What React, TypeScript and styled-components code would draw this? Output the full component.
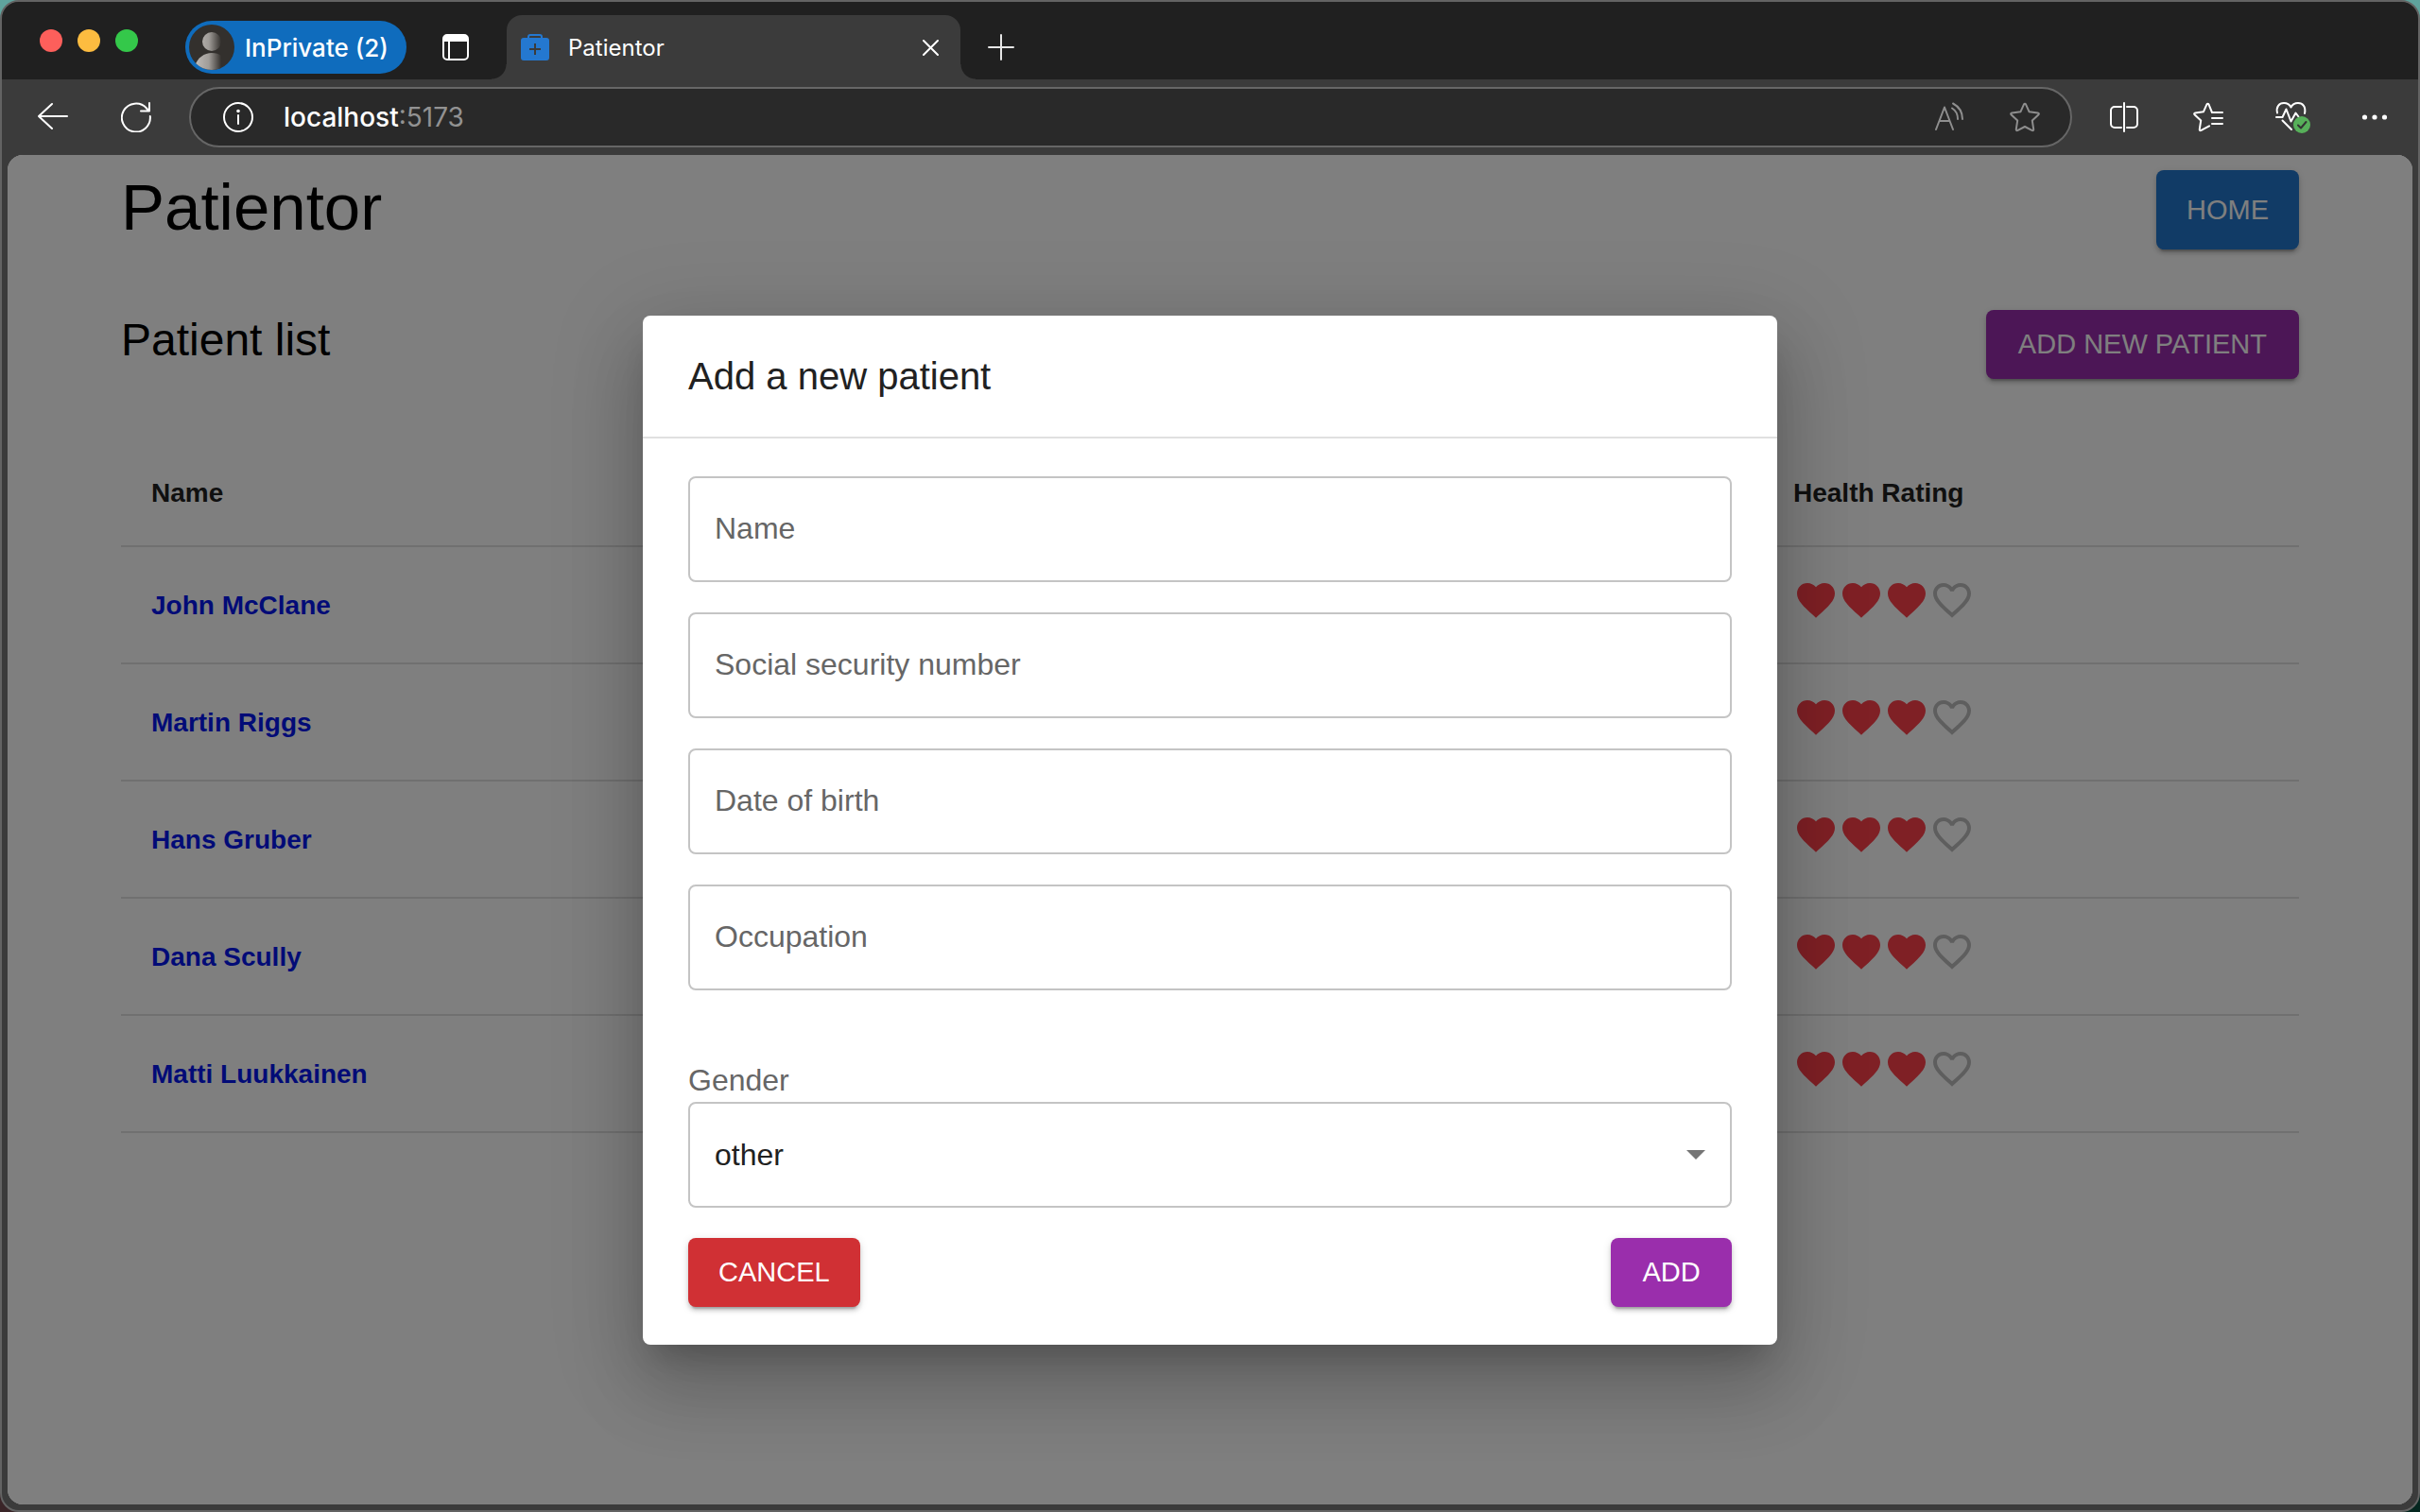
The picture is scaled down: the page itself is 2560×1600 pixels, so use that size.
import React from "react";
import styled, { createGlobalStyle, css } from "styled-components";

const helvetica = `"Liberation Sans", Arial, sans-serif`;
const system = `Inter, "Liberation Sans", sans-serif`;

const GlobalStyle = createGlobalStyle`
  *, *::before, *::after { box-sizing: border-box; }
  html, body { margin: 0; padding: 0; }
  body {
    background: linear-gradient(90deg, #5fa39d 0 50%, #5fa39d 50%) top / 100% 50% no-repeat,
      linear-gradient(90deg, #3a2528 0 50%, #04261f 50%) bottom / 100% 50% no-repeat;
    font-family: ${helvetica};
    color: #000;
  }
  button, input, select { font: inherit; color: inherit; }
`;

const BrowserWindow = styled.div`
  display: flex;
  flex-direction: column;
  height: 100vh;
  overflow: hidden;
  border: 2px solid #636363;
  border-radius: 20px;
  background: #3b3b3b;
`;

/* ---------- tab strip ---------- */

const TabStrip = styled.header`
  display: flex;
  align-items: center;
  height: 82px;
  flex: none;
  padding-left: 40px;
  background: #202020;
  font-family: ${system};
  color: #fff;
`;

const TrafficLights = styled.div`
  display: flex;
  gap: 16px;
  margin-right: 50px;
`;

const Light = styled.span<{ $color: string }>`
  width: 24px;
  height: 24px;
  border-radius: 50%;
  background: ${(p) => p.$color};
`;

const StripItems = styled.div`
  display: flex;
  align-items: center;
  align-self: flex-end;
  height: 68px;
`;

const bare = css`
  border: 0;
  padding: 0;
  background: none;
  cursor: pointer;
`;

const ProfilePill = styled.button`
  ${bare}
  display: flex;
  align-items: center;
  gap: 11px;
  width: 234px;
  height: 56px;
  padding: 0 4px;
  border-radius: 28px;
  background: #0f6cbd;
  font-size: 26px;
  font-weight: 500;
  white-space: nowrap;
`;

const IconButton = styled.button<{ $color?: string }>`
  ${bare}
  display: flex;
  align-items: center;
  justify-content: center;
  width: 64px;
  height: 64px;
  flex: none;
  color: ${(p) => p.$color ?? "#fff"};
  svg { display: block; }
`;

const WorkspaceButton = styled(IconButton)`
  margin: 0 22px 0 20px;
`;

const Tab = styled.div`
  position: relative;
  display: flex;
  align-items: center;
  gap: 20px;
  width: 480px;
  height: 68px;
  padding: 0 0 0 15px;
  border-radius: 16px 16px 0 0;
  background: #3b3b3b;
  font-size: 24px;

  &::before,
  &::after {
    content: "";
    position: absolute;
    bottom: 0;
    width: 16px;
    height: 16px;
  }
  &::before {
    right: 100%;
    background: radial-gradient(circle at 0 0, transparent 15px, #3b3b3b 16px);
  }
  &::after {
    left: 100%;
    background: radial-gradient(circle at 100% 0, transparent 15px, #3b3b3b 16px);
  }
`;

const TabTitle = styled.span`
  flex: 1;
`;

const NewTabButton = styled(IconButton)`
  margin-left: 11px;
`;

/* ---------- toolbar ---------- */

const Toolbar = styled.nav`
  display: flex;
  align-items: center;
  gap: 24px;
  height: 80px;
  flex: none;
  padding: 0 14px 0 22px;
`;

const AddressBar = styled.div`
  display: flex;
  align-items: center;
  gap: 16px;
  flex: 1;
  height: 64px;
  padding: 0 16px 0 18px;
  border: 2px solid #666;
  border-radius: 32px;
  background: #292929;
  font-family: ${system};
  font-size: 28px;
`;

const Url = styled.span`
  flex: 1;
  color: #929292;
  strong { font-weight: 500; color: #fff; }
`;

/* ---------- page ---------- */

const Viewport = styled.main`
  position: relative;
  flex: 1;
  min-height: 0;
  margin: 0 6px 6px;
  overflow: hidden;
  border-radius: 16px;
  background: #fff;
`;

const Container = styled.div`
  max-width: 2400px;
  margin: 0 auto;
  padding: 16px 48px;
`;

const TitleRow = styled.div`
  display: flex;
  justify-content: space-between;
  align-items: stretch;
`;

const ListRow = styled.div`
  display: flex;
  justify-content: space-between;
  align-items: flex-start;
  margin: 64px 0;
`;

const AppTitle = styled.h1`
  margin: 0;
  font-size: 69px;
  font-weight: 400;
  line-height: 80px;
`;

const ListTitle = styled.h2`
  margin: 0;
  font-size: 48px;
  font-weight: 400;
  line-height: 64px;
`;

const Button = styled.button<{ $color: string; $wide?: boolean; $tall?: boolean }>`
  min-width: 128px;
  height: ${(p) => (p.$tall ? 84 : 73)}px;
  padding: 0 ${(p) => (p.$wide ? 34 : 32)}px;
  border: 0;
  border-radius: 8px;
  background: ${(p) => p.$color};
  color: #fff;
  font-size: 29px;
  text-transform: uppercase;
  white-space: nowrap;
  cursor: pointer;
  box-shadow: 0 6px 2px -4px rgba(0, 0, 0, 0.2), 0 4px 4px rgba(0, 0, 0, 0.14),
    0 2px 10px rgba(0, 0, 0, 0.12);
`;

const PatientTable = styled.table`
  width: 100%;
  border-spacing: 0;
  font-size: 28px;
  line-height: 40px;
  text-align: left;
`;

const HeadCell = styled.th<{ $rating?: boolean }>`
  width: ${(p) => (p.$rating ? "567px" : "auto")};
  height: 114px;
  padding: 2px 32px 0;
  border-bottom: 2px solid #e0e0e0;
  color: #212121;
  font-weight: 700;
`;

const Cell = styled.td<{ $top?: boolean }>`
  height: 124px;
  padding: ${(p) => (p.$top ? "32px 32px 0" : "2px 32px 0")};
  border-bottom: 2px solid #e0e0e0;
  vertical-align: ${(p) => (p.$top ? "top" : "middle")};
`;

const PatientLink = styled.a`
  color: #0417ee;
  font-weight: 700;
  text-decoration: none;
`;

const Hearts = styled.div`
  display: flex;
  svg { width: 48px; height: 48px; }
`;

/* ---------- dialog ---------- */

const Backdrop = styled.div`
  position: absolute;
  inset: 0;
  display: flex;
  align-items: center;
  justify-content: center;
  background: rgba(0, 0, 0, 0.5);
`;

const Dialog = styled.section`
  width: 100%;
  max-width: 1200px;
  margin: 64px;
  border-radius: 8px;
  background: #fff;
  box-shadow: 0 22px 30px -14px rgba(0, 0, 0, 0.2), 0 48px 76px 6px rgba(0, 0, 0, 0.14),
    0 18px 92px 16px rgba(0, 0, 0, 0.12);
`;

const DialogTitle = styled.h2`
  margin: 0;
  padding: 32px 48px;
  border-bottom: 2px solid #e0e0e0;
  color: #212121;
  font-size: 40px;
  font-weight: 400;
  line-height: 64px;
`;

const Form = styled.form`
  display: flex;
  flex-direction: column;
  gap: 32px;
  padding: 40px 48px;
  font-size: 32px;
  line-height: 46px;
`;

const Field = styled.div`
  display: grid;
  align-items: center;
  > * { grid-area: 1 / 1; }
`;

const box = css`
  width: 100%;
  height: 112px;
  padding: 0 26px;
  border: 2px solid #c4c4c4;
  border-radius: 8px;
  background: transparent;
  color: #212121;
  outline: none;
`;

const TextInput = styled.input`
  ${box}
  &:not(:placeholder-shown) + label { visibility: hidden; }
`;

const FieldLabel = styled.label`
  padding: 0 28px 2px;
  color: #666;
  pointer-events: none;
`;

const GenderGroup = styled.div`
  margin-top: 40px;
`;

const GenderLabel = styled.label`
  display: block;
  color: #666;
`;

const Select = styled.select`
  ${box}
  appearance: none;
`;

const SelectArrow = styled.svg`
  justify-self: end;
  margin-right: 28px;
  pointer-events: none;
`;

const Actions = styled.div`
  display: flex;
  justify-content: space-between;
`;

/* ---------- icons ---------- */

const line = {
  fill: "none",
  stroke: "currentColor",
  strokeWidth: 2,
  strokeLinecap: "round" as const,
  strokeLinejoin: "round" as const,
};

const Avatar = () => (
  <svg width="48" height="48" viewBox="0 0 48 48">
    <defs>
      <linearGradient id="person" x1="8" x2="34" y1="0" y2="0" gradientUnits="userSpaceOnUse">
        <stop offset="0" stopColor="#bcb8b4" />
        <stop offset="0.5" stopColor="#a09c98" />
        <stop offset="1" stopColor="#33302d" />
      </linearGradient>
      <clipPath id="disc"><circle cx="24" cy="24" r="24" /></clipPath>
    </defs>
    <g clipPath="url(#disc)">
      <rect width="48" height="48" fill="#33302d" />
      <circle cx="24" cy="18" r="10" fill="url(#person)" />
      <path d="M6 44C9 35 16 30 24 30c4 0 8 1 10 3v15H6z" fill="url(#person)" />
    </g>
  </svg>
);

const WorkspaceIcon = () => (
  <svg width="28" height="28" viewBox="0 0 28 28">
    <rect x="1" y="1" width="26" height="26" rx="4" {...line} />
    <path d="M1 8V5a4 4 0 0 1 4-4h18a4 4 0 0 1 4 4v3z" fill="currentColor" />
    <path d="M7 8v19" {...line} />
  </svg>
);

const Favicon = () => (
  <svg width="30" height="28" viewBox="0 0 30 28">
    <path d="M8 5V3a2 2 0 0 1 2-2h10a2 2 0 0 1 2 2v2" fill="none" stroke="#2478d0" strokeWidth="2" />
    <rect y="4" width="30" height="24" rx="3" fill="#2478d0" />
    <path d="M15 10v12M9 16h12" stroke="#3b3b3b" strokeWidth="2" />
  </svg>
);

const CloseIcon = () => (
  <svg width="18" height="18" viewBox="0 0 18 18">
    <path d="M2 2l15 15M17 2L2 17" {...line} />
  </svg>
);

const PlusIcon = () => (
  <svg width="28" height="28" viewBox="0 0 28 28">
    <path d="M14 1v26M1 14h26" {...line} />
  </svg>
);

const BackIcon = () => (
  <svg width="32" height="32" viewBox="0 0 32 32">
    <path d="M31 15H1M15 2L1 15l14 13" {...line} />
  </svg>
);

const ReloadIcon = () => (
  <svg width="32" height="32" viewBox="0 0 32 32">
    <path d="M30.800 15A15 15 0 1 1 27 6.500L29.500 9.500M30 1v8.500h-9" {...line} />
  </svg>
);

const InfoIcon = () => (
  <svg width="32" height="32" viewBox="0 0 32 32">
    <circle cx="16" cy="16" r="15" {...line} />
    <path d="M16 14v9" {...line} />
    <circle cx="16" cy="9.500" r="1.800" fill="currentColor" />
  </svg>
);

const ReadAloudIcon = () => (
  <svg width="32" height="32" viewBox="0 0 32 32">
    <path d="M2 29L11 5.500 20 29M5.500 20h11M19 6.500C23 9 25 13 25 18M20 1.500C26.500 5 30 11 30 18" {...line} />
  </svg>
);

const StarIcon = () => (
  <svg width="32" height="32" viewBox="0 0 32 32">
    <path
      d="M14.900 2.600q1.100-1.900 2.200 0L20.600 10.300l9 1.200q2.100.5.700 2L23.800 19.600l1.400 9.100q.1 2-1.800 1.200L16 26l-7.400 3.900q-1.900.8-1.800-1.200l1.400-9.100L1.700 13.500q-1.400-1.500.7-2l9-1.200z"
      {...line}
    />
  </svg>
);

const SplitIcon = () => (
  <svg width="32" height="32" viewBox="0 0 32 32">
    <path d="M12 5H5a4 4 0 0 0-4 4v14a4 4 0 0 0 4 4h7M18 5h7a4 4 0 0 1 4 4v14a4 4 0 0 1-4 4h-7M15 1v30" {...line} />
  </svg>
);

const FavoritesIcon = () => (
  <svg width="32" height="32" viewBox="0 0 32 32">
    <path
      d="M17 25.300L8.600 29.900q-1.900.8-1.800-1.200l1.400-9.100L1.700 13.500q-1.400-1.500.7-2l8.500-1.200L14.400 2.600q1.100-1.900 2.200 0L20 11h11M20 17h11M20 23h11"
      {...line}
    />
  </svg>
);

const HealthIcon = () => (
  <svg width="40" height="36" viewBox="0 0 40 36">
    <path
      d="M5 13.500C3.500 7 7 3 12 3c3.500 0 6 1.500 7.500 4.500C21 4.500 23.500 3 27 3c5 0 8.500 4 7 11M4 18h6.500l4-8.500 5 13 5-9 3 4M10.500 21.500L20 31"
      {...line}
    />
    <circle cx="31" cy="26" r="9" fill="#57b05a" />
    <path d="M27 26.500l3 3 5.500-6.500" {...line} stroke="#333" />
  </svg>
);

const DotsIcon = () => (
  <svg width="28" height="28" viewBox="0 0 28 28" fill="currentColor">
    <circle cx="3.500" cy="14" r="2.600" />
    <circle cx="14" cy="14" r="2.600" />
    <circle cx="24.500" cy="14" r="2.600" />
  </svg>
);

const HeartIcon = ({ filled }: { filled: boolean }) =>
  filled ? (
    <svg viewBox="0 0 24 24" fill="#ff404b">
      <path d="m12 21.350-1.450-1.320C5.400 15.360 2 12.280 2 8.500 2 5.420 4.420 3 7.500 3c1.740 0 3.410.81 4.500 2.090C13.090 3.810 14.760 3 16.500 3 19.580 3 22 5.420 22 8.500c0 3.780-3.400 6.860-8.550 11.540L12 21.350z" />
    </svg>
  ) : (
    <svg viewBox="0 0 24 24" fill="#bdbdbd">
      <path d="M16.500 3c-1.740 0-3.410.81-4.500 2.090C10.910 3.810 9.240 3 7.500 3 4.420 3 2 5.420 2 8.500c0 3.780 3.400 6.860 8.550 11.540L12 21.350l1.450-1.320C18.600 15.360 22 12.280 22 8.500 22 5.420 19.580 3 16.500 3zm-4.400 15.550-.1.100-.1-.1C7.140 14.240 4 11.390 4 8.500 4 6.500 5.500 5 7.500 5c1.540 0 3.040.99 3.570 2.360h1.870C13.460 5.990 14.960 5 16.500 5c2 0 3.500 1.500 3.500 3.500 0 2.890-3.140 5.740-7.900 10.050z" />
    </svg>
  );

/* ---------- data ---------- */

const patients = [
  { name: "John McClane", rating: 3 },
  { name: "Martin Riggs", rating: 3 },
  { name: "Hans Gruber", rating: 3 },
  { name: "Dana Scully", rating: 3 },
  { name: "Matti Luukkainen", rating: 3 },
];

const fields = [
  { id: "name", label: "Name" },
  { id: "ssn", label: "Social security number" },
  { id: "birth", label: "Date of birth" },
  { id: "occupation", label: "Occupation" },
];

const BrowserChrome = () => (
  <>
    <TabStrip>
      <TrafficLights>
        <Light $color="#fd5f5b" />
        <Light $color="#fdbc40" />
        <Light $color="#34c84a" />
      </TrafficLights>
      <StripItems>
        <ProfilePill type="button">
          <Avatar />
          InPrivate (2)
        </ProfilePill>
        <WorkspaceButton type="button" aria-label="Workspaces"><WorkspaceIcon /></WorkspaceButton>
        <Tab>
          <Favicon />
          <TabTitle>Patientor</TabTitle>
          <IconButton type="button" aria-label="Close tab"><CloseIcon /></IconButton>
        </Tab>
        <NewTabButton type="button" aria-label="New tab" $color="#e6e6e6"><PlusIcon /></NewTabButton>
      </StripItems>
    </TabStrip>
    <Toolbar>
      <IconButton type="button" aria-label="Back"><BackIcon /></IconButton>
      <IconButton type="button" aria-label="Reload"><ReloadIcon /></IconButton>
      <AddressBar>
        <IconButton type="button" aria-label="Site information"><InfoIcon /></IconButton>
        <Url><strong>localhost</strong>:5173</Url>
        <IconButton type="button" aria-label="Read aloud" $color="#8e8e8e"><ReadAloudIcon /></IconButton>
        <IconButton type="button" aria-label="Add to favorites" $color="#8e8e8e"><StarIcon /></IconButton>
      </AddressBar>
      <IconButton type="button" aria-label="Split screen"><SplitIcon /></IconButton>
      <IconButton type="button" aria-label="Favorites"><FavoritesIcon /></IconButton>
      <IconButton type="button" aria-label="Browser essentials"><HealthIcon /></IconButton>
      <IconButton type="button" aria-label="More"><DotsIcon /></IconButton>
    </Toolbar>
  </>
);

const PatientList = () => (
  <Container>
    <TitleRow>
      <AppTitle>Patientor</AppTitle>
      <Button type="button" $color="#2276cc" $tall>Home</Button>
    </TitleRow>
    <ListRow>
      <ListTitle>Patient list</ListTitle>
      <Button type="button" $color="#982cac" $wide>Add New Patient</Button>
    </ListRow>
    <PatientTable>
      <thead>
        <tr>
          <HeadCell>Name</HeadCell>
          <HeadCell $rating>Health Rating</HeadCell>
        </tr>
      </thead>
      <tbody>
        {patients.map((patient) => (
          <tr key={patient.name}>
            <Cell><PatientLink href="#">{patient.name}</PatientLink></Cell>
            <Cell $top>
              <Hearts>
                {[1, 2, 3, 4].map((n) => (
                  <HeartIcon key={n} filled={n <= patient.rating} />
                ))}
              </Hearts>
            </Cell>
          </tr>
        ))}
      </tbody>
    </PatientTable>
  </Container>
);

const AddPatientDialog = () => (
  <Backdrop>
    <Dialog role="dialog" aria-labelledby="dialog-title">
      <DialogTitle id="dialog-title">Add a new patient</DialogTitle>
      <Form onSubmit={(event) => event.preventDefault()}>
        {fields.map((field) => (
          <Field key={field.id}>
            <TextInput id={field.id} type="text" placeholder=" " />
            <FieldLabel htmlFor={field.id}>{field.label}</FieldLabel>
          </Field>
        ))}
        <GenderGroup>
          <GenderLabel htmlFor="gender">Gender</GenderLabel>
          <Field>
            <Select id="gender" defaultValue="other">
              <option value="other">other</option>
            </Select>
            <SelectArrow width="20" height="10" viewBox="0 0 20 10">
              <path d="M0 0h20L10 10z" fill="#757575" />
            </SelectArrow>
          </Field>
        </GenderGroup>
        <Actions>
          <Button type="button" $color="#d03034">Cancel</Button>
          <Button type="submit" $color="#9a2eac">Add</Button>
        </Actions>
      </Form>
    </Dialog>
  </Backdrop>
);

export default function App() {
  return (
    <>
      <GlobalStyle />
      <BrowserWindow>
        <BrowserChrome />
        <Viewport>
          <PatientList />
          <AddPatientDialog />
        </Viewport>
      </BrowserWindow>
    </>
  );
}
